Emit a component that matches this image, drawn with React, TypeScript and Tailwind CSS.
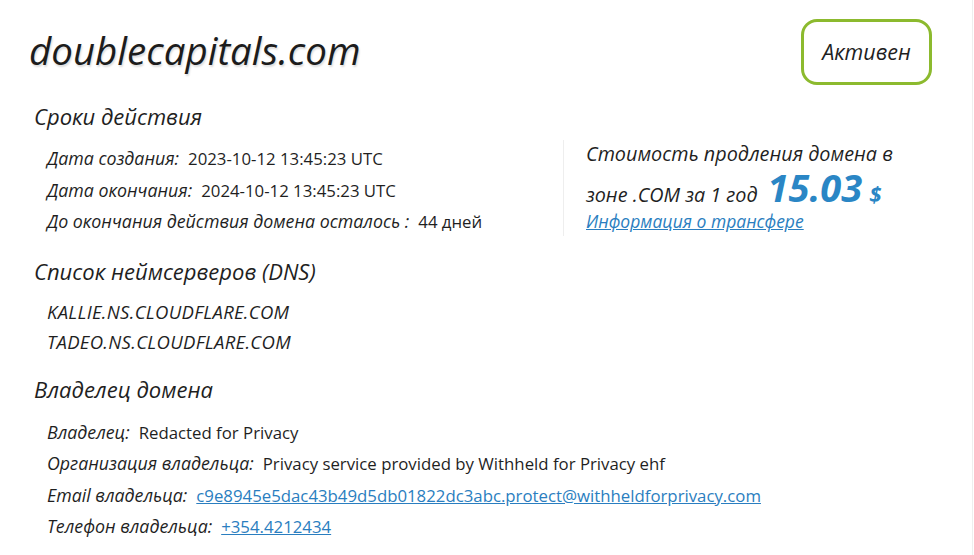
import type { ReactNode } from "react";

const font = { fontFamily: '"Open Sans", "Noto Sans", "DejaVu Sans", sans-serif' };

function Row({ label, children }: { label: string; children: ReactNode }) {
  return (
    <div className="flex items-center h-[31.5px] text-[#1f1f1f]">
      <span className="italic text-[17.8px]">{label}:</span>
      <span className="ml-[9px] text-[16.8px]">{children}</span>
    </div>
  );
}

function Heading({ children, className = "" }: { children: ReactNode; className?: string }) {
  return (
    <h2 className={"italic text-[22px] leading-[32px] text-[#1f1f1f] ml-[34px] " + className}>
      {children}
    </h2>
  );
}

export default function App() {
  return (
    <div style={font} className="w-[973px] h-[555px] bg-white border-r border-[#eeeeee] overflow-hidden">
      {/* Header */}
      <div className="flex items-center justify-between pt-[19px] pl-[29px] pr-[40px]">
        <h1 className="italic font-medium text-[38.5px] leading-none text-[#1c1c1c] mt-[-3px] [text-shadow:1px_2px_2px_rgba(0,0,0,0.14)]">
          doublecapitals.com
        </h1>
        <div className="w-[131px] h-[66px] rounded-[16px] border-[3px] border-[#8cba2e] flex items-center justify-center italic text-[21.5px] text-[#1f1f1f]">
          Активен
        </div>
      </div>

      {/* Validity + renewal price */}
      <div className="flex">
        <div className="w-[563px]">
          <Heading className="mt-[15px]">Сроки действия</Heading>
          <div className="pl-[47px] mt-[11px]">
            <Row label="Дата создания">2023-10-12 13:45:23 UTC</Row>
            <Row label="Дата окончания">2024-10-12 13:45:23 UTC</Row>
            <Row label="До окончания действия домена осталось ">44 дней</Row>
          </div>
        </div>
        <div className="mt-[55px] h-[96px] border-l border-[#eeeeee] pl-[22px] italic text-[#1f1f1f]">
          <div className="text-[19.8px] leading-[28px]">Стоимость продления домена в</div>
          <div className="flex items-baseline h-[36px] text-[19.8px] leading-[30px]">
            <span>зоне .COM за 1 год</span>
            <span className="ml-[10px] text-[38px] font-bold text-[#2a86c5] leading-none">15.03</span>
            <span className="ml-[7px] text-[22px] font-bold text-[#2a86c5] leading-none">$</span>
          </div>
          <a href="#" className="block text-[17.5px] leading-[30px] mt-[2px] text-[#2a7ec0] underline">
            Информация о трансфере
          </a>
        </div>
      </div>

      {/* Name servers */}
      <Heading className="mt-[17px]">Список неймсерверов (DNS)</Heading>
      <div className="pl-[47px] mt-[10px] italic text-[18.5px] tracking-[0.3px] text-[#1f1f1f]">
        <div className="h-[30px] flex items-center">KALLIE.NS.CLOUDFLARE.COM</div>
        <div className="h-[30px] flex items-center">TADEO.NS.CLOUDFLARE.COM</div>
      </div>

      {/* Owner */}
      <Heading className="mt-[16px]">Владелец домена</Heading>
      <div className="pl-[47px] mt-[12px]">
        <Row label="Владелец">Redacted for Privacy</Row>
        <Row label="Организация владельца">Privacy service provided by Withheld for Privacy ehf</Row>
        <Row label="Email владельца">
          <a href="#" className="text-[#2a7ec0] underline">
            c9e8945e5dac43b49d5db01822dc3abc.protect@withheldforprivacy.com
          </a>
        </Row>
        <Row label="Телефон владельца">
          <a href="#" className="text-[#2a7ec0] underline">
            +354.4212434
          </a>
        </Row>
      </div>
    </div>
  );
}
